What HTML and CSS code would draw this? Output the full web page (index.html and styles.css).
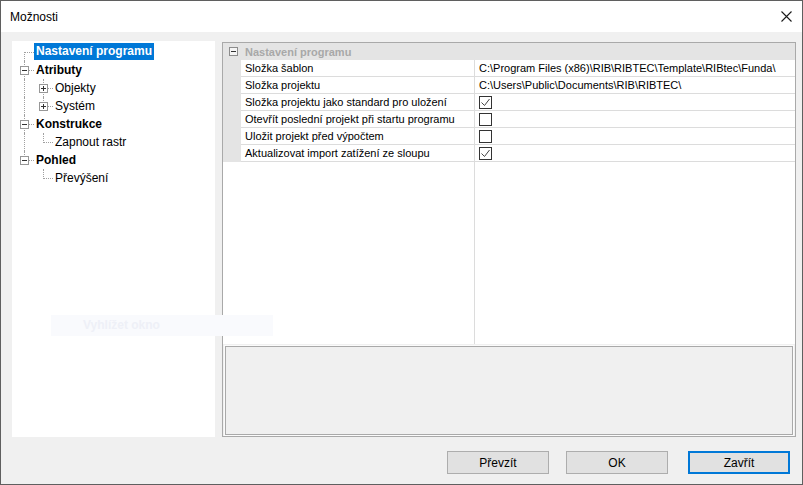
FILE: index.html
```html
<!DOCTYPE html>
<html>
<head>
<meta charset="utf-8">
<link rel="stylesheet" href="styles.css">
</head>
<body>
<div class="window">
  <div class="titlebar">
    <span class="title">Možnosti</span>
    <span class="close"><svg width="11" height="11" viewBox="0 0 11 11"><path d="M0.5 0.5 L10.5 10.5 M10.5 0.5 L0.5 10.5" stroke="#1a1a1a" stroke-width="1.1" fill="none"/></svg></span>
  </div>
  <div class="content">
    <div class="main">
      <div class="tree">
        <div class="row"><span class="cell vb h"></span><span class="label bold sel">Nastavení programu</span></div>
        <div class="row"><span class="cell v h"><span class="box minus"></span></span><span class="label bold">Atributy</span></div>
        <div class="row"><span class="cell v"></span><span class="cell v h"><span class="box plus"></span></span><span class="label">Objekty</span></div>
        <div class="row"><span class="cell v"></span><span class="cell vt h"><span class="box plus"></span></span><span class="label">Systém</span></div>
        <div class="row"><span class="cell v h"><span class="box minus"></span></span><span class="label bold">Konstrukce</span></div>
        <div class="row"><span class="cell v"></span><span class="cell vt h"></span><span class="label">Zapnout rastr</span></div>
        <div class="row"><span class="cell vt h"><span class="box minus"></span></span><span class="label bold">Pohled</span></div>
        <div class="row"><span class="cell"></span><span class="cell vt h"></span><span class="label">Převýšení</span></div>
      </div>
      <div class="right">
        <div class="grid">
          <div class="ghdr"><span class="gut"><span class="box minus gbox"></span></span><span class="hdrtext">Nastavení programu</span></div>
          <div class="grow"><span class="gut"></span><span class="gl">Složka šablon</span><span class="gv">C:\Program Files (x86)\RIB\RIBTEC\Template\RIBtec\Funda\</span></div>
          <div class="grow"><span class="gut"></span><span class="gl">Složka projektu</span><span class="gv">C:\Users\Public\Documents\RIB\RIBTEC\</span></div>
          <div class="grow"><span class="gut"></span><span class="gl">Složka projektu jako standard pro uložení</span><span class="gv"><span class="chk on"><svg width="11" height="11" viewBox="0 0 11 11"><path d="M1.5 5.5 L4.5 8.5 L9.5 2" stroke="#444" stroke-width="1" fill="none"/></svg></span></span></div>
          <div class="grow"><span class="gut"></span><span class="gl">Otevřít poslední projekt při startu programu</span><span class="gv"><span class="chk"></span></span></div>
          <div class="grow"><span class="gut"></span><span class="gl">Uložit projekt před výpočtem</span><span class="gv"><span class="chk"></span></span></div>
          <div class="grow"><span class="gut"></span><span class="gl">Aktualizovat import zatížení ze sloupu</span><span class="gv"><span class="chk on"><svg width="11" height="11" viewBox="0 0 11 11"><path d="M1.5 5.5 L4.5 8.5 L9.5 2" stroke="#444" stroke-width="1" fill="none"/></svg></span></span></div>
          <div class="gfill"><span class="gfl"></span></div>
        </div>
        <div class="desc"></div>
      </div>
    </div>
    <div class="buttons">
      <button class="btn">Převzít</button>
      <button class="btn">OK</button>
      <button class="btn def">Zavřít</button>
    </div>
  </div>
  <div class="ghost">Vyhlížet okno</div>
</div>
</body>
</html>
```
FILE: styles.css
```css
* { box-sizing: border-box; }
html, body { margin: 0; padding: 0; }
body { font-family: "Liberation Sans", Arial, sans-serif; font-size: 12px; color: #000; background: #f0f0f0; }
.window { position: relative; width: 803px; height: 485px; border: 1px solid #5f5f5f; display: flex; flex-direction: column; background: #f0f0f0; overflow: hidden; }
.titlebar { height: 31px; background: #fff; display: flex; align-items: center; justify-content: space-between; padding: 0 10px 0 9px; flex: none; }
.title { font-size: 12px; color: #000; }
.close { display: flex; }
.content { flex: 1; display: flex; flex-direction: column; padding: 9px 6px 0 11px; }
.main { display: flex; gap: 7px; height: 396px; }
.tree { width: 203px; background: #fff; padding: 2px 0 0 3px; }
.row { display: flex; height: 18px; align-items: center; }
.cell { position: relative; width: 19px; height: 18px; flex: none; }
.cell.v::before, .cell.vt::before, .cell.vb::before { content: ""; position: absolute; left: 9px; border-left: 1px dotted #a0a0a0; }
.cell.v::before { top: 0; bottom: 0; }
.cell.vt::before { top: 0; height: 10px; }
.cell.vb::before { top: 9px; bottom: 0; }
.cell.h::after { content: ""; position: absolute; left: 10px; right: 0; top: 9px; border-top: 1px dotted #a0a0a0; }
.box { position: absolute; left: 5px; top: 5px; width: 9px; height: 9px; border: 1px solid #979797; background: #fff; z-index: 1; }
.box::before { content: ""; position: absolute; left: 1px; top: 3px; width: 5px; height: 1px; background: #333; }
.box.plus::after { content: ""; position: absolute; left: 3px; top: 1px; width: 1px; height: 5px; background: #333; }
.label { padding: 0 2px; line-height: 17px; height: 17px; white-space: nowrap; }
.bold { font-weight: bold; }
.sel { background: #0078d7; color: #fff; margin-top: -1px; }
.right { flex: 1; border: 1px solid #a9a9a9; display: flex; flex-direction: column; background: #f0f0f0; margin-top: 1px; }
.grid { flex: 1; background: #fff; display: flex; flex-direction: column; font-size: 11px; }
.ghdr { display: flex; height: 17px; background: #e4e4e4; align-items: center; }
.gut { position: relative; width: 18px; height: 100%; flex: none; background: #e4e4e4; }
.gbox { left: 6px; top: 4px; background: #f4f4f4; border-color: #8c8c8c; }
.hdrtext { font-weight: bold; color: #a8a8a8; padding-left: 4px; }
.grow { display: flex; height: 17px; }
.gl { width: 234px; border-right: 1px solid #dcdcdc; border-bottom: 1px solid #dcdcdc; padding-left: 4px; padding-top: 1px; line-height: 15px; white-space: nowrap; flex: none; }
.gv { flex: 1; border-bottom: 1px solid #dcdcdc; padding-left: 4px; padding-top: 1px; line-height: 15px; white-space: nowrap; display: flex; align-items: center; }
.chk { width: 13px; height: 13px; border: 1px solid #333; background: #fff; display: flex; align-items: center; justify-content: center; }
.gfill { flex: 1; display: flex; }
.gfl { width: 252px; border-right: 1px solid #dcdcdc; }
.desc { height: 89px; margin: 2px 2px 1px 2px; border: 1px solid #a9a9a9; box-shadow: 0 0 0 1px #fbfbfb; background: #f0f0f0; }
.buttons { display: flex; justify-content: flex-end; gap: 17px; margin-top: 14px; padding-right: 6px; }
.btn { width: 102px; height: 23px; background: #e1e1e1; border: 1px solid #adadad; font-family: "Liberation Sans", Arial, sans-serif; font-size: 12px; color: #000; padding: 0; }
.btn.def { border: 2px solid #0078d7; margin-left: 3px; }
.ghost { position: absolute; left: 50px; top: 314px; width: 222px; height: 21px; background: #f9fafd; color: #eef0f7; font-weight: bold; font-size: 12px; line-height: 21px; padding-left: 32px; }
```
